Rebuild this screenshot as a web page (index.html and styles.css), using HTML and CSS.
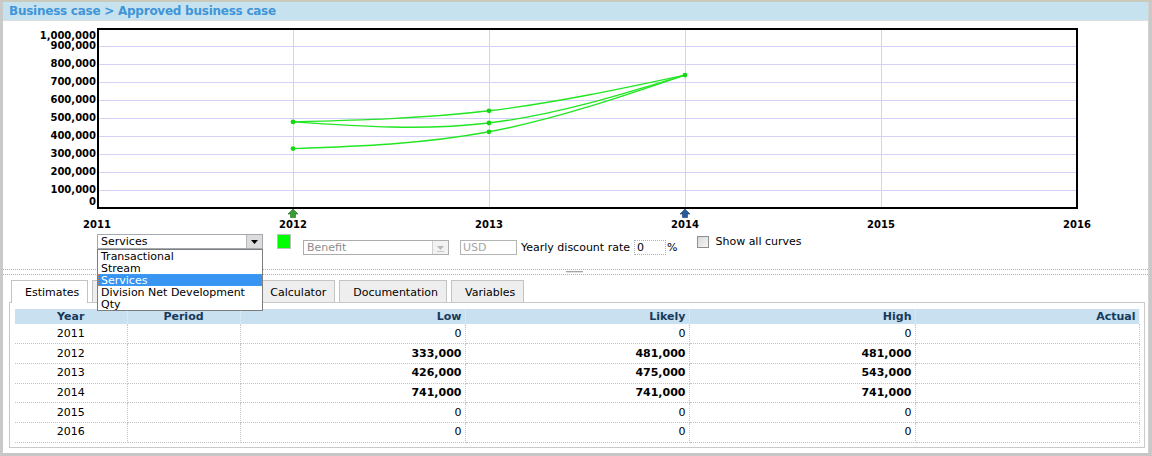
FILE: index.html
```html
<!DOCTYPE html>
<html>
<head>
<meta charset="utf-8">
<title>Approved business case</title>
<link rel="stylesheet" href="styles.css">
</head>
<body>
<div class="app">
  <div class="frame">
    <div class="titlebar">Business case &gt; Approved business case</div>

    <div class="chart-panel">
      <svg class="chart" width="1145" height="212" viewBox="3 21 1145 212">
        <g class="grid">
          <line x1="99" y1="46.5" x2="1076" y2="46.5"/>
          <line x1="99" y1="64.5" x2="1076" y2="64.5"/>
          <line x1="99" y1="82.5" x2="1076" y2="82.5"/>
          <line x1="99" y1="100.5" x2="1076" y2="100.5"/>
          <line x1="99" y1="118.5" x2="1076" y2="118.5"/>
          <line x1="99" y1="136.5" x2="1076" y2="136.5"/>
          <line x1="99" y1="154.5" x2="1076" y2="154.5"/>
          <line x1="99" y1="172.5" x2="1076" y2="172.5"/>
          <line x1="99" y1="190.5" x2="1076" y2="190.5"/>
          <line x1="293.5" y1="30" x2="293.5" y2="207"/>
          <line x1="489.5" y1="30" x2="489.5" y2="207"/>
          <line x1="685.5" y1="30" x2="685.5" y2="207"/>
          <line x1="881.5" y1="30" x2="881.5" y2="207"/>
        </g>
        <rect class="frame-rect" x="98" y="29" width="979" height="179"/>
        <g class="axis y-axis">
          <text x="96" y="39">1,000,000</text>
          <text x="96" y="48.5">900,000</text>
          <text x="96" y="66.5">800,000</text>
          <text x="96" y="84.5">700,000</text>
          <text x="96" y="102.5">600,000</text>
          <text x="96" y="120.5">500,000</text>
          <text x="96" y="138.5">400,000</text>
          <text x="96" y="156.5">300,000</text>
          <text x="96" y="174.5">200,000</text>
          <text x="96" y="192.5">100,000</text>
          <text x="96" y="205">0</text>
        </g>
        <g class="axis x-axis">
          <text x="97" y="227.5">2011</text>
          <text x="293" y="227.5">2012</text>
          <text x="489" y="227.5">2013</text>
          <text x="685" y="227.5">2014</text>
          <text x="881" y="227.5">2015</text>
          <text x="1077" y="227.5">2016</text>
        </g>
        <polygon class="mark-green" points="288,214 293,209 298,214 295.5,214 295.5,217.5 290.5,217.5 290.5,214"/>
        <polygon class="mark-blue" points="680,214 685,209 690,214 687.5,214 687.5,217.5 682.5,217.5 682.5,214"/>
        <g class="curves">
          <path d="M293,121.9 C358.33,120.25 423.67,118.6 489,110.8 C554.33,103 619.67,89.05 685,75.1"/>
          <path d="M293,121.9 C358.33,126.35 423.67,130.8 489,123 C554.33,115.2 619.67,95.15 685,75.1"/>
          <path d="M293,148.6 C358.33,146.33 423.67,144.05 489,131.8 C554.33,119.55 619.67,97.33 685,75.1"/>
        </g>
        <g class="dots">
          <circle cx="293" cy="121.9" r="2.4"/>
          <circle cx="293" cy="148.6" r="2.4"/>
          <circle cx="489" cy="110.8" r="2.4"/>
          <circle cx="489" cy="123" r="2.4"/>
          <circle cx="489" cy="131.8" r="2.4"/>
          <circle cx="685" cy="75.1" r="2.4"/>
        </g>
      </svg>

      <div class="controls">
        <div class="select">
          <span class="select-text">Services</span>
          <span class="select-btn">
            <svg width="13" height="11" viewBox="0 0 13 11"><polygon points="3,4 10,4 6.5,8" fill="#000"/></svg>
          </span>
          <ul class="dropdown">
            <li>Transactional</li>
            <li>Stream</li>
            <li class="selected">Services</li>
            <li>Division Net Development</li>
            <li>Qty</li>
          </ul>
        </div>
        <span class="swatch"></span>
        <div class="select disabled">
          <span class="select-text">Benefit</span>
          <span class="select-btn">
            <svg width="13" height="11" viewBox="0 0 13 11"><polygon points="3,4 10,4 6.5,8" fill="#b8b8b8"/><line x1="3" y1="9.5" x2="10" y2="9.5" stroke="#c8c8c8"/></svg>
          </span>
        </div>
        <span class="input currency">USD</span>
        <span class="label">Yearly discount rate</span>
        <span class="input rate">0</span>
        <span class="label pct">%</span>
        <span class="checkbox"></span>
        <span class="label check-label">Show all curves</span>
      </div>
    </div>

    <div class="splitter"><span class="grip"></span></div>

    <div class="bottom-panel">
      <div class="tabs">
        <span class="tab active">Estimates</span>
        <span class="tab wide"></span>
        <span class="tab">Calculator</span>
        <span class="tab">Documentation</span>
        <span class="tab">Variables</span>
      </div>
      <div class="tab-body">
        <table class="grid-table">
          <colgroup>
            <col class="c-year"><col class="c-period"><col class="c-low"><col class="c-likely"><col class="c-high"><col class="c-actual">
          </colgroup>
          <thead>
            <tr><th class="ctr">Year</th><th class="ctr">Period</th><th>Low</th><th>Likely</th><th>High</th><th>Actual</th></tr>
          </thead>
          <tbody>
            <tr><td class="ctr">2011</td><td></td><td>0</td><td>0</td><td>0</td><td></td></tr>
            <tr><td class="ctr">2012</td><td></td><td class="b">333,000</td><td class="b">481,000</td><td class="b">481,000</td><td></td></tr>
            <tr><td class="ctr">2013</td><td></td><td class="b">426,000</td><td class="b">475,000</td><td class="b">543,000</td><td></td></tr>
            <tr><td class="ctr">2014</td><td></td><td class="b">741,000</td><td class="b">741,000</td><td class="b">741,000</td><td></td></tr>
            <tr><td class="ctr">2015</td><td></td><td>0</td><td>0</td><td>0</td><td></td></tr>
            <tr><td class="ctr">2016</td><td></td><td>0</td><td>0</td><td>0</td><td></td></tr>
          </tbody>
        </table>
      </div>
    </div>
  </div>
</div>
</body>
</html>
```

FILE: styles.css
```css
* { box-sizing: border-box; }

html, body {
  margin: 0;
  padding: 0;
  background: #fff;
}

body {
  font-family: "DejaVu Sans", Verdana, sans-serif;
  font-size: 11px;
  color: #000;
}

.app {
  width: 1152px;
  height: 456px;
  border-left: 3px solid #c9c9c9;
  border-right: 3px solid #c9c9c9;
  border-top: 2px solid #cacabc;
  border-bottom: 3px solid #c6c6c6;
  overflow: hidden;
}

.frame {
  height: 451px;
  border-right: 1px solid #d2d2d2;
  display: flex;
  flex-direction: column;
}

.titlebar {
  height: 19px;
  line-height: 18px;
  padding-left: 6px;
  background: #c7e2ef;
  border-bottom: 1px solid #dedede;
  color: #3f95d8;
  font-weight: bold;
  font-size: 12px;
  letter-spacing: -0.25px;
  white-space: nowrap;
}

.chart-panel {
  height: 249px;
  border-bottom: 1px dotted #b6a8c6;
  flex: none;
}

.chart {
  display: block;
}

.grid line {
  stroke: #d5d1f6;
  stroke-width: 1;
}

.frame-rect {
  fill: none;
  stroke: #000;
  stroke-width: 2;
}

.axis text {
  font-family: "DejaVu Sans", Verdana, sans-serif;
  font-weight: bold;
  font-size: 10px;
  fill: #000;
}

.y-axis text { text-anchor: end; }
.x-axis text { text-anchor: middle; }

.mark-green { fill: #3c9b34; stroke: #1d6a1a; stroke-width: 0.6; }
.mark-blue { fill: #2a5a9a; stroke: #163a6a; stroke-width: 0.6; }

.curves path {
  fill: none;
  stroke: #22e622;
  stroke-width: 1.4;
}

.dots circle { fill: #14d814; }

/* controls row */
.controls {
  display: flex;
  align-items: flex-start;
  padding-left: 94px;
  height: 36px;
}

.select {
  position: relative;
  display: flex;
  width: 166px;
  height: 15px;
  margin-top: 1px;
  border: 1px solid #a3a9ae;
  background: #fff;
}

.select-text {
  flex: 1;
  padding-left: 3px;
  line-height: 13px;
  white-space: nowrap;
}

.select-btn {
  width: 16px;
  height: 13px;
  background: #dcdcdc;
  border-left: 1px solid #b8b8b8;
  display: flex;
  align-items: center;
  justify-content: center;
}

.select-btn svg { display: block; }

.dropdown {
  position: absolute;
  top: 14px;
  left: -1px;
  width: 166px;
  margin: 0;
  padding: 0;
  list-style: none;
  background: #fff;
  border: 1px solid #7d7d7d;
  z-index: 10;
}

.dropdown li {
  height: 12px;
  line-height: 13px;
  padding-left: 3px;
  white-space: nowrap;
}

.dropdown li.selected {
  background: #3794f0;
  color: #fff;
  outline: 1px dotted #c87d4a;
  outline-offset: -1px;
}

.swatch {
  width: 14px;
  height: 15px;
  margin-left: 14px;
  margin-top: 1px;
  background: #00ff00;
  border: 1px solid #bdbdbd;
}

.select.disabled {
  width: 146px;
  margin-left: 12px;
  margin-top: 7px;
  border-color: #adadad;
  color: #8c8c8c;
}

.select.disabled .select-text { line-height: 14px; }

.select.disabled .select-btn {
  background: #f2f2f2;
  border-left-color: #d0d0d0;
}

.input {
  height: 15px;
  line-height: 14px;
  margin-top: 7px;
  padding-left: 2px;
  border: 1px solid #b4b4b4;
  background: #fff;
}

.currency {
  width: 57px;
  margin-left: 11px;
  color: #a6a6a6;
}

.label {
  height: 15px;
  line-height: 16px;
  margin-top: 7px;
  white-space: nowrap;
}

.currency + .label { margin-left: 4px; }

.rate {
  width: 32px;
  margin-left: 4px;
  border: 1px dotted #a8b4c4;
}

.pct { margin-left: 1px; }

.checkbox {
  width: 12px;
  height: 12px;
  margin-top: 3px;
  margin-left: 20px;
  border: 1px solid #8e8e8e;
  background: linear-gradient(135deg, #d8d8d8, #f6f6f6);
}

.check-label {
  margin-top: 1px;
  margin-left: 6px;
  line-height: 15px;
}

/* splitter */
.splitter {
  height: 4px;
  flex: none;
  display: flex;
  align-items: center;
  justify-content: center;
}

.grip {
  width: 17px;
  height: 2px;
  border-top: 1px solid #a4a4a4;
  border-bottom: 1px solid #e2e2e2;
  margin-left: -2px;
}

/* bottom panel */
.bottom-panel {
  flex: 1;
  border-top: 1px dotted #b6a8c6;
  padding: 5px 3px 0 6px;
}

.tabs {
  display: flex;
  gap: 4px;
  padding-left: 2px;
  height: 22px;
}

.tab {
  height: 22px;
  line-height: 23px;
  padding: 0 8px 0 13px;
  border: 1px solid #c3c3c3;
  border-bottom: none;
  background: #eeeeee;
  white-space: nowrap;
  overflow: hidden;
}

.tab.active {
  background: #fff;
  height: 23px;
  position: relative;
  z-index: 2;
}

.tab.wide { width: 160px; }

.tab-body {
  height: 146px;
  border: 1px solid #c9c9c9;
  padding: 6px 0 0 5px;
  position: relative;
  z-index: 1;
}

.grid-table {
  width: 1124px;
  table-layout: fixed;
  border-collapse: collapse;
}

.c-year { width: 112px; }
.c-period { width: 113px; }
.c-low { width: 225px; }
.c-likely { width: 224px; }
.c-high { width: 226px; }
.c-actual { width: 224px; }

.grid-table th {
  height: 15px;
  padding: 0 3px;
  background: #c8e0f0;
  color: #173a5c;
  font-weight: bold;
  font-size: 11px;
  text-align: right;
  line-height: 13px;
  border-right: 1px dotted #e6eef6;
}

.grid-table td {
  height: 19.7px;
  padding: 0 3px;
  text-align: right;
  line-height: 14px;
  border-bottom: 1px dotted #c2c2c2;
  border-right: 1px dotted #c8c8c8;
  white-space: nowrap;
}

.grid-table .ctr { text-align: center; }
.grid-table .b { font-weight: bold; }
```
